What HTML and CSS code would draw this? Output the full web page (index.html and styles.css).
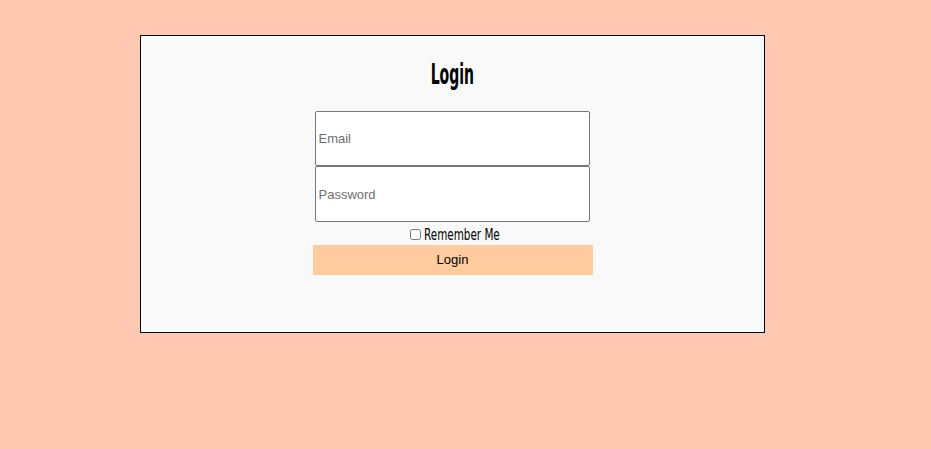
FILE: index.html
```html
<!DOCTYPE html>
<html>
<head>
<meta charset="utf-8">
<link rel="stylesheet" href="styles.css">
</head>
<body>
<div class="card">
  <h1 class="title"><span class="narrow">Login</span></h1>
  <form class="form">
    <input class="field" type="text" placeholder="Email">
    <input class="field" type="password" placeholder="Password">
    <label class="remember"><input class="check" type="checkbox"><span class="remember-text"><span class="narrow-left">Remember Me</span></span></label>
    <button class="btn" type="button">Login</button>
  </form>
</div>
</body>
</html>
```
FILE: styles.css
```css
html, body { margin: 0; padding: 0; }
body {
  background: #ffc9b1;
  height: 449px;
  padding-top: 35px;
  box-sizing: border-box;
}
.card {
  margin-left: 140px;
  width: 623px;
  height: 296px;
  border: 1px solid #000;
  background: #f9f9f9;
  display: flex;
  flex-direction: column;
  align-items: center;
}
.title {
  margin: 24px 0 0 0;
  font-family: "DejaVu Sans", sans-serif;
  font-weight: bold;
  font-size: 28px;
  line-height: 30px;
  color: #000;
}
.narrow {
  display: inline-block;
  transform: scaleX(0.5);
}
.form {
  margin-top: 21px;
  display: flex;
  flex-direction: column;
  align-items: center;
}
.field {
  width: 275px;
  height: 55px;
  box-sizing: border-box;
  border: 1px solid #767676;
  border-radius: 2px;
  margin: 0 1px 0 0;
  padding: 0 3px;
  font-family: "Liberation Sans", Arial, sans-serif;
  font-size: 13px;
  background: #fff;
}
.field + .field { height: 56px; }
.field::placeholder { color: #6f6f6f; }
.remember {
  margin: 4px 0 0 4px;
  display: flex;
  align-items: center;
  height: 16px;
  font-family: "DejaVu Sans", sans-serif;
  font-size: 16px;
  color: #000;
}
.check {
  width: 11px;
  height: 11px;
  margin: 0 3px 0 0;
}
.remember-text {
  display: inline-block;
  width: 76px;
  white-space: nowrap;
}
.narrow-left {
  display: inline-block;
  transform: scaleX(0.65);
  transform-origin: left center;
}
.btn {
  margin-top: 3px;
  width: 280px;
  height: 30px;
  border: none;
  background: #ffcb9f;
  font-family: "Liberation Sans", Arial, sans-serif;
  font-size: 13px;
  color: #000;
  padding: 0 0 2px 0;
}
```
